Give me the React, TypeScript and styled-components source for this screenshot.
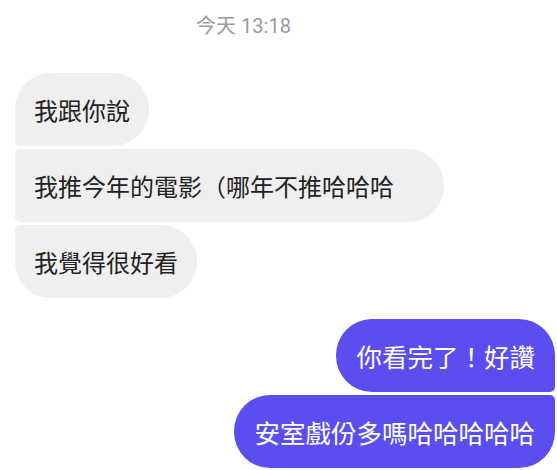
import React from "react";
import styled, { createGlobalStyle, css } from "styled-components";

const GlobalStyle = createGlobalStyle`
  html, body {
    margin: 0;
    padding: 0;
    background: #ffffff;
  }
  body {
    font-family: "Noto Sans CJK TC", "Noto Sans", Roboto, sans-serif;
  }
`;

type Side = "in" | "out";
type Position = "first" | "middle" | "last";

interface Message {
  id: number;
  side: Side;
  text: string;
  extraRight?: number; // some bubbles leave extra room after the text
}

const messages: Message[] = [
  { id: 1, side: "in", text: "我跟你說" },
  { id: 2, side: "in", text: "我推今年的電影（哪年不推哈哈哈", extraRight: 31 },
  { id: 3, side: "in", text: "我覺得很好看" },
  { id: 4, side: "out", text: "你看完了！好讚" },
  { id: 5, side: "out", text: "安室戲份多嗎哈哈哈哈哈" },
];

const BIG = 36;
const SMALL = 5;

// rounded corners depend on the bubble's place in its group
const radius = (side: Side, pos: Position) => {
  const top = pos === "first" ? BIG : SMALL;
  const bottom = pos === "last" ? BIG : SMALL;
  if (side === "in") return `${top}px ${BIG}px ${BIG}px ${bottom}px`;
  return `${BIG}px ${top}px ${bottom}px ${BIG}px`;
};

const Chat: React.FC = () => {
  const groups: Message[][] = [];
  messages.forEach((m) => {
    const last = groups[groups.length - 1];
    if (last && last[0].side === m.side) last.push(m);
    else groups.push([m]);
  });

  return (
    <Screen>
      <Timestamp>今天 13:18</Timestamp>
      <Thread>
        {groups.map((group) => (
          <Group key={group[0].id} $side={group[0].side}>
            {group.map((m, i) => {
              const pos: Position =
                i === 0 ? "first" : i === group.length - 1 ? "last" : "middle";
              return (
                <Bubble
                  key={m.id}
                  $side={m.side}
                  $radius={radius(m.side, pos)}
                  $extraRight={m.extraRight ?? 0}
                >
                  {m.text}
                </Bubble>
              );
            })}
          </Group>
        ))}
      </Thread>
    </Screen>
  );
};

const Screen = styled.div`
  width: 557px;
  height: 470px;
  overflow: hidden;
  background: #ffffff;
  display: flex;
  flex-direction: column;
`;

const Timestamp = styled.div`
  text-align: center;
  color: #9a9a9a;
  font-family: Roboto, "Noto Sans CJK TC", sans-serif;
  font-size: 20px;
  line-height: 24px;
  padding-top: 14px;
  padding-right: 70px;
`;

const Thread = styled.div`
  display: flex;
  flex-direction: column;
  gap: 21px;
  padding: 35px 2px 0 15px;
`;

const Group = styled.div<{ $side: Side }>`
  display: flex;
  flex-direction: column;
  gap: 3px;
  align-items: ${({ $side }) => ($side === "in" ? "flex-start" : "flex-end")};
`;

const Bubble = styled.div<{ $side: Side; $radius: string; $extraRight: number }>`
  box-sizing: border-box;
  height: 73px;
  display: flex;
  align-items: center;
  white-space: nowrap;
  border-radius: ${({ $radius }) => $radius};
  padding: 0 ${({ $extraRight }) => 19 + $extraRight}px 0 19px;

  ${({ $side }) =>
    $side === "in"
      ? css`
          background: #efefef;
          color: #222222;
          font-size: 24px;
        `
      : css`
          background: #5b4ef0;
          color: #ffffff;
          font-size: 25.5px;
          padding: 0 20px;
        `}
`;

const App: React.FC = () => (
  <>
    <GlobalStyle />
    <Chat />
  </>
);

export default App;
